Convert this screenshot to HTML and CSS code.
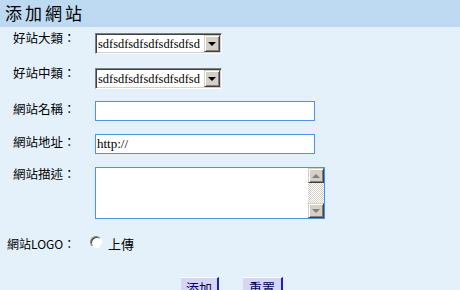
FILE: index.html
```html
<!DOCTYPE html>
<html>

<head>
  <title>添加網站</title>
  <meta charset="UTF-8">
  <link rel="stylesheet" href="styles.css">
</head>

<body>
  <div class="header">添加網站</div>
  <form class="form">
    <div class="row rowFirst">
      <label class="label labelSelect">好站大類：</label>
      <div class="combo">
        <select class="comboSelect">
          <option>sdfsdfsdfsdfsdfsdfsd</option>
        </select>
        <span class="dropBtn"><span class="arrowDown"></span></span>
      </div>
    </div>
    <div class="row">
      <label class="label labelSelect">好站中類：</label>
      <div class="combo">
        <select class="comboSelect">
          <option>sdfsdfsdfsdfsdfsdfsd</option>
        </select>
        <span class="dropBtn"><span class="arrowDown"></span></span>
      </div>
    </div>
    <div class="row">
      <label class="label labelInput">網站名稱：</label>
      <input class="field" type="text">
    </div>
    <div class="row">
      <label class="label labelInput">網站地址：</label>
      <input class="field" type="text" value="http://">
    </div>
    <div class="row rowMemo">
      <label class="label">網站描述：</label>
      <div class="memo">
        <textarea class="memoText"></textarea>
        <div class="scrollBar">
          <span class="scrollBtn"><span class="arrowUp"></span></span>
          <span class="scrollTrack"></span>
          <span class="scrollBtn"><span class="arrowDownGray"></span></span>
        </div>
      </div>
    </div>
    <div class="rowLogo">
      <span class="logoLabel">網站LOGO：</span>
      <input class="radio" type="radio" name="logo">
      <span class="radioText">上傳</span>
    </div>
    <div class="actions">
      <button class="btn" type="button">添加</button>
      <button class="btn" type="reset">重置</button>
    </div>
  </form>
</body>

</html>
```

FILE: styles.css
```css
body {
  margin: 0;
  background-color: #e4f1fb;
  font-family: "Noto Sans CJK TC", "Noto Sans CJK SC", sans-serif;
  font-size: 12px;
  color: #000;
  overflow: hidden;
}
.header {
  height: 27px;
  line-height: 26px;
  padding-left: 5px;
  background-color: #bddaf2;
  font-size: 17px;
  letter-spacing: 3px;
}
.form {
  margin: 0;
  padding-top: 6px;
}
.row {
  display: flex;
  align-items: flex-start;
  height: 33px;
}
.rowFirst {
  height: 35px;
}
.rowMemo {
  height: 68px;
}
.label {
  width: 82px;
  padding-left: 13px;
  line-height: 14px;
  font-size: 12.5px;
}
.labelSelect {
  margin-top: -2px;
}
.labelInput {
  margin-top: 1px;
}

/* old style combo box */
.combo {
  position: relative;
  width: 127px;
  height: 21px;
  box-sizing: border-box;
  border: 1px solid;
  border-color: #808080 #fff #fff #808080;
  box-shadow: inset 1px 1px #404040, inset -1px -1px #d4d0c8;
  background-color: #fff;
}
.comboSelect {
  appearance: none;
  -webkit-appearance: none;
  width: 100%;
  height: 100%;
  border: 0;
  padding: 0 0 0 2px;
  margin: 0;
  background: transparent;
  font-family: "Liberation Serif", serif;
  font-size: 12.4px;
  color: #000;
}
.dropBtn {
  position: absolute;
  top: 1px;
  right: 1px;
  width: 16px;
  height: 17px;
  box-sizing: border-box;
  border: 1px solid;
  border-color: #d4d0c8 #404040 #404040 #d4d0c8;
  box-shadow: inset 1px 1px #fff, inset -1px -1px #808080;
  background-color: #d4d0c8;
  display: flex;
  align-items: center;
  justify-content: center;
}
.arrowDown {
  width: 0;
  height: 0;
  border-left: 4px solid transparent;
  border-right: 4px solid transparent;
  border-top: 4px solid #000;
}

.field {
  width: 220px;
  height: 20px;
  box-sizing: border-box;
  border: 1px solid #4596e8;
  margin: 0;
  padding: 0 1px;
  background-color: #fff;
  font-family: "Liberation Serif", serif;
  font-size: 13px;
  color: #000;
  outline: none;
}

.memo {
  display: flex;
  width: 230px;
  height: 52px;
  box-sizing: border-box;
  border: 1px solid #4596e8;
  background-color: #fff;
}
.memoText {
  flex: 1;
  border: 0;
  margin: 0;
  padding: 0;
  resize: none;
  outline: none;
  background: transparent;
}
.scrollBar {
  width: 16px;
  display: flex;
  flex-direction: column;
}
.scrollBtn {
  height: 15px;
  box-sizing: border-box;
  border: 1px solid;
  border-color: #d4d0c8 #404040 #404040 #d4d0c8;
  box-shadow: inset 1px 1px #fff, inset -1px -1px #808080;
  background-color: #d4d0c8;
  display: flex;
  align-items: center;
  justify-content: center;
}
.scrollTrack {
  flex: 1;
  background: repeating-conic-gradient(#d4d0c8 0 25%, #fff 0 50%) 0 0 / 2px 2px;
}
.arrowUp {
  width: 0;
  height: 0;
  border-left: 4px solid transparent;
  border-right: 4px solid transparent;
  border-bottom: 4px solid #808080;
}
.arrowDownGray {
  width: 0;
  height: 0;
  border-left: 4px solid transparent;
  border-right: 4px solid transparent;
  border-top: 4px solid #808080;
}

.rowLogo {
  display: flex;
  align-items: flex-start;
  height: 42px;
  padding-left: 7px;
}
.logoLabel {
  width: 83px;
  margin-top: 2px;
  line-height: 14px;
}
.radio {
  appearance: none;
  -webkit-appearance: none;
  width: 12px;
  height: 12px;
  margin: 1px 6px 0 0;
  box-sizing: border-box;
  border-radius: 50%;
  border: 1px solid;
  border-color: #808080 #fff #fff #808080;
  box-shadow: inset 1px 1px #404040;
  background-color: #fff;
}
.radioText {
  margin-top: 2px;
  line-height: 14px;
  font-size: 13px;
}

.actions {
  display: flex;
  gap: 24px;
  padding-left: 181px;
}
.btn {
  width: 38px;
  height: 20px;
  padding: 0;
  border: 0;
  border-top: 1px solid #fff;
  border-right: 2px solid #1c1cc8;
  background-color: #d6d6f4;
  color: #000066;
  font-family: "Noto Sans CJK TC", "Noto Sans CJK SC", sans-serif;
  font-size: 13px;
  line-height: 16px;
}
.btn + .btn {
  width: 40px;
}
```
